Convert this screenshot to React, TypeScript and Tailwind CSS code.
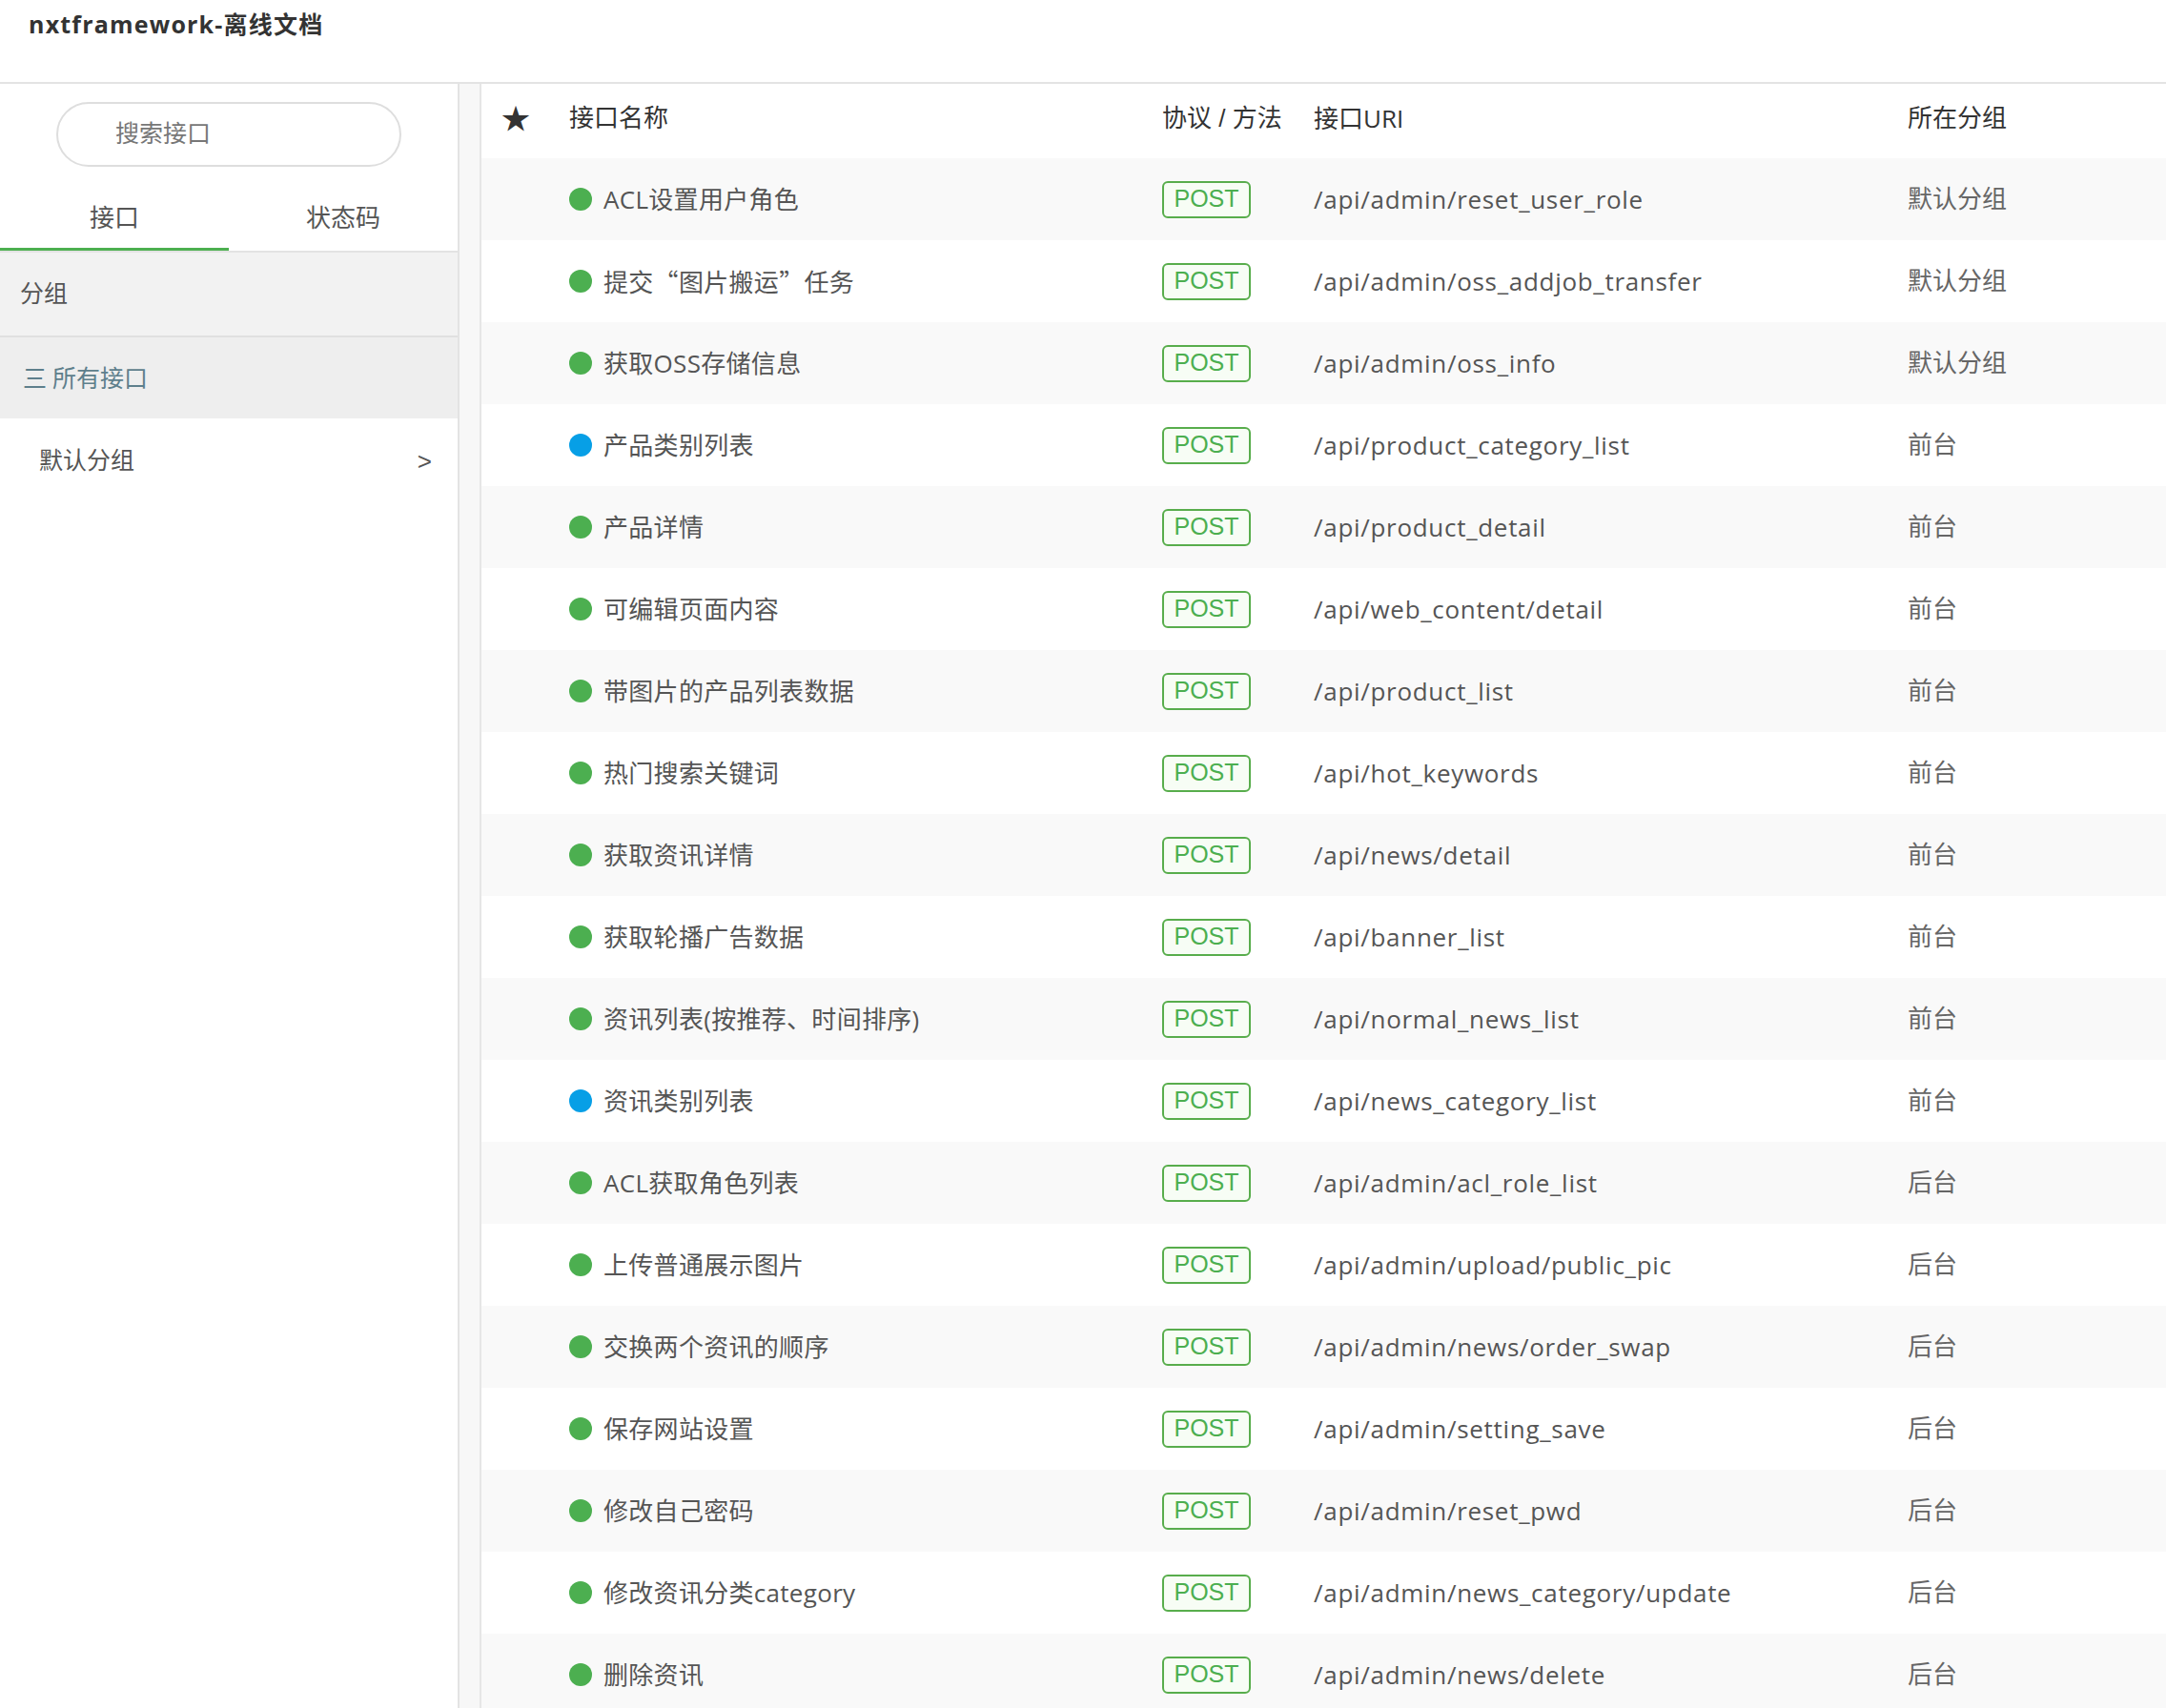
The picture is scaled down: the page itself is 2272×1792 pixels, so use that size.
import React from "react";

type Api = {
  name: React.ReactNode;
  uri: string;
  group: string;
  blue?: boolean;
};

const cjk = "font-['Noto_Sans_CJK_SC',sans-serif]";

const apis: Api[] = [
  { name: "ACL设置用户角色", uri: "/api/admin/reset_user_role", group: "默认分组" },
  {
    name: (
      <>
        提交<span className={cjk}>“</span>图片搬运<span className={cjk}>”</span>任务
      </>
    ),
    uri: "/api/admin/oss_addjob_transfer",
    group: "默认分组",
  },
  { name: "获取OSS存储信息", uri: "/api/admin/oss_info", group: "默认分组" },
  { name: "产品类别列表", uri: "/api/product_category_list", group: "前台", blue: true },
  { name: "产品详情", uri: "/api/product_detail", group: "前台" },
  { name: "可编辑页面内容", uri: "/api/web_content/detail", group: "前台" },
  { name: "带图片的产品列表数据", uri: "/api/product_list", group: "前台" },
  { name: "热门搜索关键词", uri: "/api/hot_keywords", group: "前台" },
  { name: "获取资讯详情", uri: "/api/news/detail", group: "前台" },
  { name: "获取轮播广告数据", uri: "/api/banner_list", group: "前台" },
  { name: "资讯列表(按推荐、时间排序)", uri: "/api/normal_news_list", group: "前台" },
  { name: "资讯类别列表", uri: "/api/news_category_list", group: "前台", blue: true },
  { name: "ACL获取角色列表", uri: "/api/admin/acl_role_list", group: "后台" },
  { name: "上传普通展示图片", uri: "/api/admin/upload/public_pic", group: "后台" },
  { name: "交换两个资讯的顺序", uri: "/api/admin/news/order_swap", group: "后台" },
  { name: "保存网站设置", uri: "/api/admin/setting_save", group: "后台" },
  { name: "修改自己密码", uri: "/api/admin/reset_pwd", group: "后台" },
  { name: "修改资讯分类category", uri: "/api/admin/news_category/update", group: "后台" },
  { name: "删除资讯", uri: "/api/admin/news/delete", group: "后台" },
];

const font = "font-['Liberation_Sans','Noto_Sans_CJK_SC',sans-serif]";
const latin = "font-['Open_Sans','Noto_Sans_CJK_SC',sans-serif]";
const cols = "grid grid-cols-[92px_622px_159px_623px_1fr] items-center";

const Sidebar = () => (
  <aside className="w-[482px] shrink-0 bg-white border-r-2 border-[#e3e3e3] flex flex-col">
    {/* search */}
    <div className="pt-[19px] flex justify-center">
      <div className="w-[362px] h-[68px] rounded-full border-2 border-[#dedede] flex items-center pl-[60px] text-[25px] text-[#777]">
        搜索接口
      </div>
    </div>

    {/* tabs */}
    <div className="mt-[26px] flex border-b-2 border-[#e3e3e3]">
      <div className="w-1/2 h-[62px] flex items-center justify-center pb-[2px] border-b-[3px] border-[#4caf50] text-[26px] text-[#555]">
        接口
      </div>
      <div className="w-1/2 h-[62px] flex items-center justify-center pb-[2px] border-b-[3px] border-transparent text-[26px] text-[#555]">
        状态码
      </div>
    </div>

    <div className="h-[89px] bg-[#f2f2f2] border-b-2 border-[#e0e0e0] flex items-center px-[21px] text-[25px] text-[#555]">
      分组
    </div>
    <div className="h-[85px] bg-[#eeeeee] flex items-center pl-[24px] pt-[2px] text-[25px] text-[#5e7f8c]">
      <span className="mr-[6px]">三</span>所有接口
    </div>
    <div className="h-[86px] flex items-center justify-between pl-[41px] pr-[27px] pt-[4px] text-[25px] text-[#555]">
      <span>默认分组</span>
      <span className="text-[26px]">&gt;</span>
    </div>
  </aside>
);

const Badge = () => (
  <span className="inline-flex items-center justify-center w-[93px] h-[39px] rounded-[6px] border-2 border-[#58ad4c] bg-[#f7fdf5] text-[25px] text-[#4caf50]">
    POST
  </span>
);

const Table = () => (
  <section className="flex-1 ml-[21px] border-l-2 border-[#e6e6e6] bg-white">
    <div className={`${cols} h-[78px] pb-[5px] text-[26px] text-[#333]`}>
      <span className="pl-[21px] text-[30px] leading-none">★</span>
      <span>接口名称</span>
      <span>协议 / 方法</span>
      <span className={latin}>接口URI</span>
      <span>所在分组</span>
    </div>
    {apis.map((a, i) => (
      <div
        key={a.uri}
        className={`${cols} h-[86px] text-[26px] ${i % 2 === 0 ? "bg-[#f9f9f9]" : "bg-white"}`}
      >
        <span />
        <span className="flex items-center gap-[12px] text-[#555]">
          <span className={`w-[24px] h-[24px] rounded-full shrink-0 ${a.blue ? "bg-[#079fe6]" : "bg-[#4caf50]"}`} />
          <span className={`${latin} tracking-[0.3px]`}>{a.name}</span>
        </span>
        <span>
          <Badge />
        </span>
        <span className={`${latin} tracking-[0.7px] text-[#555]`}>{a.uri}</span>
        <span className="text-[#666]">{a.group}</span>
      </div>
    ))}
  </section>
);

export default function App() {
  return (
    <div className={`h-[1792px] overflow-hidden flex flex-col bg-white ${font}`}>
      <header className="h-[88px] shrink-0 border-b-2 border-[#e3e3e3] pl-[30px] pt-[7px]">
        <h1 className={`${latin} text-[25px] leading-[36px] font-bold tracking-[1.2px] text-[#333]`}>
          nxtframework-离线文档
        </h1>
      </header>
      <main className="flex flex-1 bg-[#f7f7f7]">
        <Sidebar />
        <Table />
      </main>
    </div>
  );
}
